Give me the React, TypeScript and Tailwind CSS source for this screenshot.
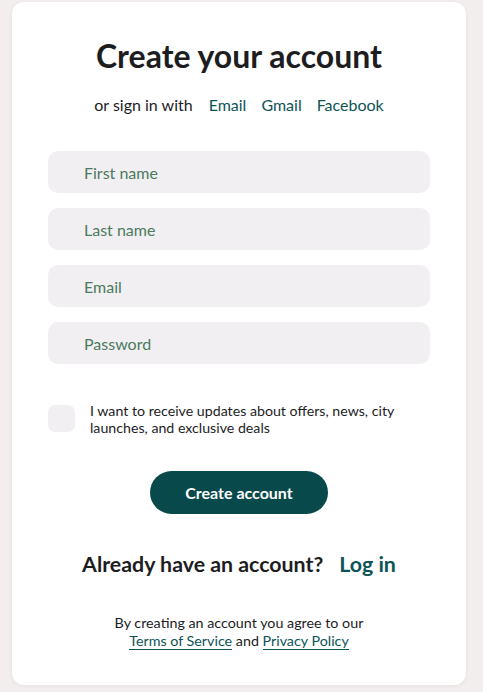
import { useState } from 'react';

const fields = ['First name', 'Last name', 'Email', 'Password'];

export default function App() {
  const [optIn, setOptIn] = useState(false);

  return (
    <div className="min-h-[692px] bg-[#f3eeee] px-3 pt-[2px] pb-[7px] font-['Lato',sans-serif]">
      <div className="w-[454px] h-[683px] bg-white rounded-[12px] shadow-[0_1px_4px_rgba(0,0,0,0.06)] px-9 pt-[34px]">
        <h1 className="text-center text-[32px] font-bold leading-[40px] text-[#1d1d1f]">Create your account</h1>

        <div className="mt-[19px] flex justify-center items-center gap-[15px] text-[16px] leading-5">
          <span className="text-[#1d1d1f] mr-[1px]">or sign in with</span>
          <a className="text-[#0d5457]">Email</a>
          <a className="text-[#0d5457]">Gmail</a>
          <a className="text-[#0d5457]">Facebook</a>
        </div>

        <form className="mt-[36px] flex flex-col gap-[15px]" onSubmit={(e) => e.preventDefault()}>
          {fields.map((f) => (
            <input
              key={f}
              type={f === 'Password' ? 'password' : 'text'}
              placeholder={f}
              className="h-[42px] w-full rounded-[10px] bg-[#f1eff2] pl-9 pr-4 text-[16px] text-[#1d1d1f] placeholder:text-[#4b7a5e] outline-none"
            />
          ))}
        </form>

        <label className="mt-[38px] flex items-start gap-[15px] cursor-pointer">
          <button
            type="button"
            onClick={() => setOptIn(!optIn)}
            className={optIn ? 'mt-[3px] shrink-0 w-[27px] h-[27px] rounded-[7px] bg-[#08494b]' : 'mt-[3px] shrink-0 w-[27px] h-[27px] rounded-[7px] bg-[#f1eff2]'}
          />
          <span className="text-[14.2px] leading-[17px] text-[#1d1d1f] pr-[20px]">
            I want to receive updates about offers, news, city launches, and exclusive deals
          </span>
        </label>

        <div className="mt-[35px] flex justify-center">
          <button className="w-[178px] h-[43px] rounded-full bg-[#08494b] text-white font-bold text-[16px]">
            Create account
          </button>
        </div>

        <div className="mt-[36px] flex justify-center items-baseline gap-[16px] text-[21.35px] font-bold leading-7">
          <span className="text-[#1d1d1f]">Already have an account?</span>
          <a className="text-[#0d5457]">Log in</a>
        </div>

        <p className="mt-[36px] text-center text-[14.3px] leading-[18px] text-[#1d1d1f]">
          By creating an account you agree to our
          <br />
          <a className="text-[#0d5457] border-b border-[#0d5457]">Terms of Service</a> and{' '}
          <a className="text-[#0d5457] border-b border-[#0d5457]">Privacy Policy</a>
        </p>
      </div>
    </div>
  );
}
